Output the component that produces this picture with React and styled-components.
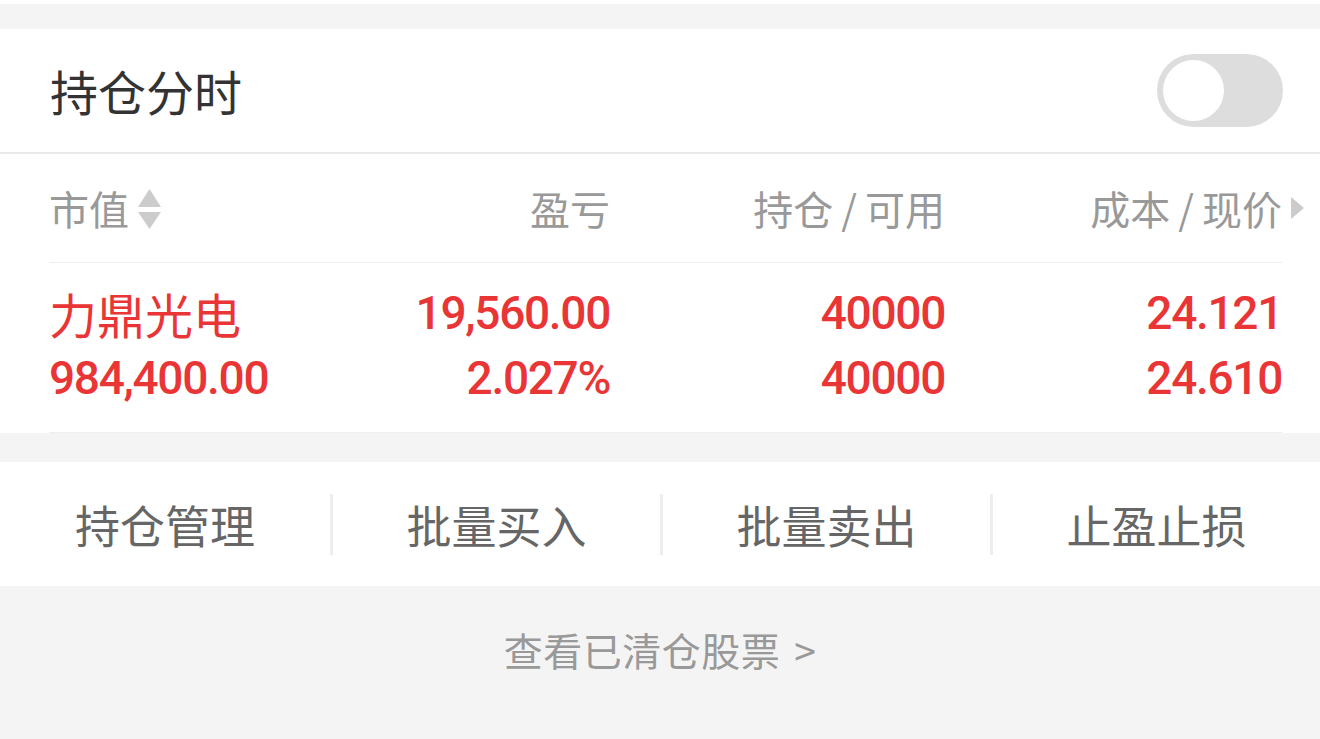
import React from "react";
import styled, { createGlobalStyle } from "styled-components";

const GlobalStyle = createGlobalStyle`
  html, body { margin: 0; padding: 0; background: #f4f4f4; }
  body { font-family: "Noto Sans CJK SC", "Noto Sans", sans-serif; }
  * { box-sizing: border-box; }
`;

const Page = styled.div`
  min-height: 739px;
  background: #f4f4f4;
  border-top: 4px solid #ffffff;
  padding-top: 25px;
`;

const Header = styled.div`
  height: 125px;
  background: #fff;
  display: flex;
  align-items: center;
  justify-content: space-between;
  padding: 0 37px 0 50px;
  border-bottom: 2px solid #e9e9e9;
`;

const Title = styled.div`
  font-size: 48px;
  color: #333;
  line-height: 1;
  margin-top: -2px;
`;

const Toggle = styled.div`
  width: 126px;
  height: 73px;
  border-radius: 37px;
  background: #dddddd;
  padding: 6px;
  display: flex;
  align-items: center;
`;

const Knob = styled.div`
  width: 61px;
  height: 61px;
  border-radius: 50%;
  background: #fff;
`;

const Table = styled.div`
  background: #fff;
  padding: 0 38px 0 49px;
`;

const Grid = styled.div`
  display: grid;
  grid-template-columns: 281px 280px 335px 1fr;
`;

const HeadRow = styled(Grid)`
  height: 109px;
  align-items: center;
  border-bottom: 1px solid #eeeeee;
`;

const HeadCell = styled.div`
  position: relative;
  display: flex;
  align-items: center;
  justify-content: ${(p) => (p.$left ? "flex-start" : "flex-end")};
  font-size: 40px;
  color: #999;
  line-height: 1;
`;

const Slash = styled.span`
  margin: 0 8px;
`;

const SortIcon = styled.svg`
  margin-left: 9px;
  margin-top: 2px;
`;

const MoreArrow = styled.svg`
  position: absolute;
  right: -22px;
  top: 50%;
  transform: translateY(-50%);
`;

const DataBlock = styled(Grid)`
  padding: 18px 0 21px;
  border-bottom: 1px solid #eeeeee;
`;

const Cell = styled.div`
  display: flex;
  flex-direction: column;
  align-items: ${(p) => (p.$left ? "flex-start" : "flex-end")};
`;

const Name = styled.div`
  font-size: 48px;
  line-height: 65px;
  color: #e93535;
`;

const Num = styled.div`
  font-family: Roboto, "Noto Sans", sans-serif;
  font-weight: 500;
  font-size: 46px;
  letter-spacing: -1.3px;
  line-height: 65px;
  color: #e93535;
`;

const Gap = styled.div`
  height: 29px;
  background: #f4f4f4;
`;

const ActionBar = styled.div`
  height: 124px;
  background: #fff;
  display: grid;
  grid-template-columns: repeat(4, 1fr);
  align-items: center;
`;

const Action = styled.div`
  height: 61px;
  display: flex;
  align-items: center;
  justify-content: center;
  font-size: 45px;
  color: #666;
  border-left: ${(p) => (p.$first ? "none" : "3px solid #eeeeee")};
`;

const Footer = styled.div`
  padding-top: 40px;
  text-align: center;
  font-size: 39px;
  letter-spacing: 0.5px;
  line-height: 46px;
  color: #999;
`;

const Chevron = styled.span`
  margin-left: 14px;
`;

const actions = ["持仓管理", "批量买入", "批量卖出", "止盈止损"];

export default function App() {
  return (
    <>
      <GlobalStyle />
      <Page>
        <Header>
          <Title>持仓分时</Title>
          <Toggle>
            <Knob />
          </Toggle>
        </Header>
        <Table>
          <HeadRow>
            <HeadCell $left>
              市值
              <SortIcon width="23" height="40" viewBox="0 0 23 40">
                <polygon points="11.5,0 23,18 0,18" fill="#cccccc" />
                <polygon points="0,23 23,23 11.5,40" fill="#cccccc" />
              </SortIcon>
            </HeadCell>
            <HeadCell>盈亏</HeadCell>
            <HeadCell>
              持仓<Slash>/</Slash>可用
            </HeadCell>
            <HeadCell>
              成本<Slash>/</Slash>现价
              <MoreArrow width="13" height="22" viewBox="0 0 13 22">
                <polygon points="0,0 13,11 0,22" fill="#cccccc" />
              </MoreArrow>
            </HeadCell>
          </HeadRow>
          <DataBlock>
            <Cell $left>
              <Name>力鼎光电</Name>
              <Num>984,400.00</Num>
            </Cell>
            <Cell>
              <Num>19,560.00</Num>
              <Num>2.027%</Num>
            </Cell>
            <Cell>
              <Num>40000</Num>
              <Num>40000</Num>
            </Cell>
            <Cell>
              <Num>24.121</Num>
              <Num>24.610</Num>
            </Cell>
          </DataBlock>
        </Table>
        <Gap />
        <ActionBar>
          {actions.map((a, i) => (
            <Action key={a} $first={i === 0}>
              {a}
            </Action>
          ))}
        </ActionBar>
        <Footer>
          查看已清仓股票<Chevron>&gt;</Chevron>
        </Footer>
      </Page>
    </>
  );
}
